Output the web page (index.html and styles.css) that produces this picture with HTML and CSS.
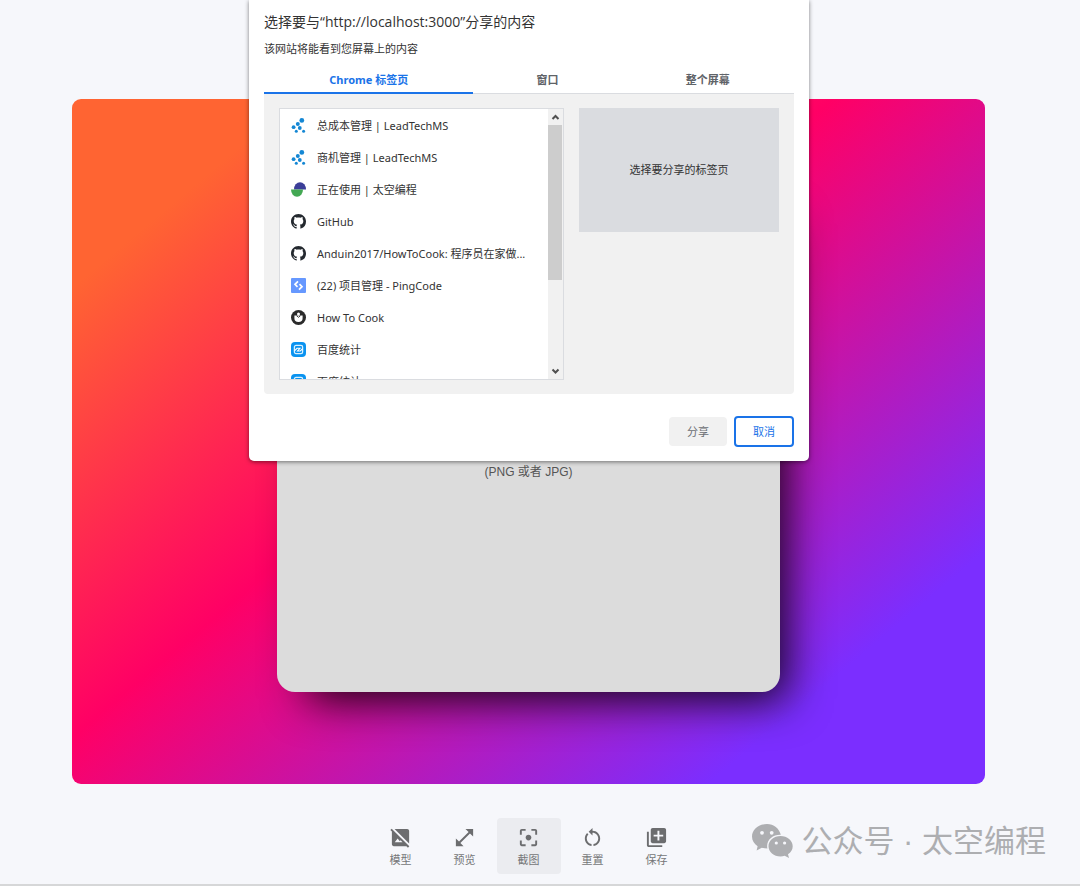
FILE: index.html
```
<!DOCTYPE html>
<html lang="zh-CN">
<head>
<meta charset="utf-8">
<meta name="viewport" content="width=device-width, initial-scale=1">
<title>截图</title>
<link rel="stylesheet" href="styles.css">
</head>
<body>
<svg class="defs" aria-hidden="true">
  <symbol id="dots" viewBox="0 0 15 15">
    <g fill="#1487d4"><circle cx="10.800" cy="2.400" r="2.400"/><circle cx="6.800" cy="6" r="2"/><circle cx="2.600" cy="9.200" r="1.900"/><circle cx="8.800" cy="10" r="1.900"/><circle cx="5.300" cy="13.300" r="1.500"/><circle cx="12.600" cy="13.300" r="1.500"/></g>
  </symbol>
  <symbol id="github" viewBox="0 0 16 16">
    <path fill="#24292f" d="M8 0C3.58 0 0 3.58 0 8c0 3.54 2.29 6.53 5.47 7.59.4.07.55-.17.55-.38 0-.19-.01-.82-.01-1.49-2.01.37-2.53-.49-2.69-.94-.09-.23-.48-.94-.82-1.13-.28-.15-.68-.52-.01-.53.63-.01 1.08.58 1.23.82.72 1.21 1.87.87 2.33.66.07-.52.28-.87.51-1.07-1.78-.2-3.64-.89-3.64-3.95 0-.87.31-1.59.82-2.15-.08-.2-.36-1.02.08-2.12 0 0 .67-.21 2.2.82.64-.18 1.32-.27 2-.27s1.36.09 2 .27c1.53-1.04 2.2-.82 2.2-.82.44 1.1.16 1.92.08 2.12.51.56.82 1.27.82 2.15 0 3.07-1.87 3.75-3.65 3.95.29.25.54.73.54 1.48 0 1.07-.01 1.93-.01 2.2 0 .21.15.46.55.38A8.01 8.01 0 0 0 16 8c0-4.42-3.58-8-8-8z"/>
  </symbol>
  <symbol id="baidu" viewBox="0 0 15 15">
    <rect width="15" height="15" rx="4" fill="#0a93f0"/>
    <rect x="3.4" y="3.4" width="8.2" height="8.2" rx="1.6" fill="none" stroke="#d9f0ff" stroke-width="1.3"/>
    <path d="M3.500 8.800 6 6.300h3L6.500 9h2.800l2.300-2.300" fill="none" stroke="#fff" stroke-width="1.1"/>
  </symbol>
</svg>

<main class="page">
  <section class="canvas">
    <div class="drop-card"><p>(PNG 或者 JPG)</p></div>
  </section>
  <nav class="toolbar" aria-label="工具">
    <button class="tool" type="button">
      <svg viewBox="0 0 24 24"><path d="M21 5c0-1.1-.9-2-2-2H5.83L21 18.17V5zM2.81 2.81 1.39 4.22 3 5.83V19c0 1.1.9 2 2 2h13.17l1.61 1.61 1.41-1.41L2.81 2.81zM6 17l3-4 2.25 3 .82-1.1 2.1 2.1H6z"/></svg>
      <span>模型</span>
    </button>
    <button class="tool" type="button">
      <svg viewBox="0 0 24 24"><path d="M21 11V3h-8l3.290 3.290-10 10L3 13v8h8l-3.290-3.290 10-10z"/></svg>
      <span>预览</span>
    </button>
    <button class="tool tool-active" type="button">
      <svg viewBox="0 0 24 24"><path d="M5 15H3v4c0 1.1.9 2 2 2h4v-2H5v-4zM5 5h4V3H5c-1.1 0-2 .9-2 2v4h2V5zm14-2h-4v2h4v4h2V5c0-1.1-.9-2-2-2zm0 16h-4v2h4c1.1 0 2-.9 2-2v-4h-2v4zM12 9c-1.66 0-3 1.34-3 3s1.34 3 3 3 3-1.34 3-3-1.34-3-3-3z"/></svg>
      <span>截图</span>
    </button>
    <button class="tool" type="button">
      <svg viewBox="0 0 24 24"><path d="M12 5V2L8 6l4 4V7c3.31 0 6 2.69 6 6 0 2.97-2.17 5.43-5 5.91v2.02c3.95-.49 7-3.85 7-7.93 0-4.42-3.58-8-8-8zm-6 8c0-1.65.67-3.15 1.76-4.24L6.34 7.34C4.9 8.79 4 10.79 4 13c0 4.08 3.05 7.44 7 7.93v-2.02c-2.83-.48-5-2.94-5-5.91z"/></svg>
      <span>重置</span>
    </button>
    <button class="tool" type="button">
      <svg viewBox="0 0 24 24"><path d="M4 6H2v14c0 1.1.9 2 2 2h14v-2H4V6zm16-4H8c-1.1 0-2 .9-2 2v12c0 1.1.9 2 2 2h12c1.1 0 2-.9 2-2V4c0-1.1-.9-2-2-2zm-1 9h-4v4h-2v-4H9V9h4V5h2v4h4v2z"/></svg>
      <span>保存</span>
    </button>
  </nav>
</main>
<div class="bottom-edge"></div>

<section class="dialog" role="dialog" aria-labelledby="dialog-title">
  <h1 class="dialog-title" id="dialog-title">选择要与“http://localhost:3000”分享的内容</h1>
  <p class="dialog-note">该网站将能看到您屏幕上的内容</p>
  <div class="tabs" role="tablist">
    <button class="tab tab-active" type="button" role="tab" aria-selected="true">Chrome 标签页</button>
    <button class="tab" type="button" role="tab">窗口</button>
    <button class="tab" type="button" role="tab">整个屏幕</button>
  </div>
  <div class="panel">
    <div class="list-box">
      <ul class="list">
        <li class="row"><svg><use href="#dots"/></svg><span class="row-text">总成本管理 | LeadTechMS</span></li>
        <li class="row"><svg><use href="#dots"/></svg><span class="row-text">商机管理 | LeadTechMS</span></li>
        <li class="row"><svg viewBox="0 0 15 15"><path d="M3 7.5a6 7.3 0 0 1 12 0z" fill="#3b3e98"/><path d="M0 7.5h12a6 7.3 0 0 1-12 0z" fill="#43a853"/></svg><span class="row-text">正在使用 | 太空编程</span></li>
        <li class="row"><svg><use href="#github"/></svg><span class="row-text">GitHub</span></li>
        <li class="row"><svg><use href="#github"/></svg><span class="row-text">Anduin2017/HowToCook: 程序员在家做...</span></li>
        <li class="row"><svg viewBox="0 0 15 15"><rect width="15" height="15" rx="1" fill="#6698ff"/><path d="M7 3.300 4 6.300 6.500 8.800M8 11.700l3-3L8.500 6.200" fill="none" stroke="#fff" stroke-width="1.700"/></svg><span class="row-text">(22) 项目管理 - PingCode</span></li>
        <li class="row"><svg viewBox="0 0 15 15"><circle cx="7.5" cy="7.5" r="7.5" fill="#2b2b2b"/><path d="M3.400 5.600h8.200v2.700a4.100 3.800 0 0 1-8.200 0z" fill="#fff"/><circle cx="7.500" cy="4.100" r="1.500" fill="#fff"/><path d="m5.600 5.800 1.900 1.500 1.900-1.500" fill="none" stroke="#2b2b2b" stroke-width=".9"/></svg><span class="row-text">How To Cook</span></li>
        <li class="row"><svg><use href="#baidu"/></svg><span class="row-text">百度统计</span></li>
        <li class="row"><svg><use href="#baidu"/></svg><span class="row-text">百度统计</span></li>
      </ul>
      <div class="scrollbar" aria-hidden="true">
        <svg viewBox="0 0 15 16"><path d="m4.500 10 3-3 3 3"/></svg>
        <div class="track"><div class="thumb"></div></div>
        <svg viewBox="0 0 15 16"><path d="m4.500 6.500 3 3 3-3"/></svg>
      </div>
    </div>
    <div class="preview">选择要分享的标签页</div>
  </div>
  <div class="actions">
    <button class="button button-share" type="button" disabled>分享</button>
    <button class="button button-cancel" type="button">取消</button>
  </div>
</section>

<div class="watermark">
  <svg viewBox="0 0 41 34"><path fill="#adaeb1" d="M15 0C6.700 0 0 5.600 0 12.600c0 4 2.200 7.400 5.600 9.700L4.600 26.500l5.200-2.700c1.800.5 3.600.7 5.600.7-1.700-8 5-14 13.400-13.700C27.200 4.500 21.800 0 15 0z"/><path fill="#adaeb1" d="M28.500 12c-6.700 0-12 4.500-12 10.200s5.300 10.200 12 10.200c1.500 0 2.900-.2 4.200-.6l4.300 2.200-1-3.700c2.900-1.900 4.700-4.800 4.700-8.100 0-5.700-5.500-10.200-12.200-10.200z"/><g fill="#f6f7fb"><circle cx="10" cy="8.800" r="1.900"/><circle cx="19.700" cy="8.800" r="1.900"/><circle cx="24.300" cy="19" r="1.600"/><circle cx="32.600" cy="19" r="1.600"/></g></svg>
  <span>公众号<span class="separator"> · </span>太空编程</span>
</div>
</body>
</html>
```

FILE: styles.css
```
* {
  box-sizing: border-box;
}

body {
  margin: 0;
  min-height: 100vh;
  display: flex;
  flex-direction: column;
  position: relative;
  background: #f6f7fb;
  color: #333;
  font-family: "Noto Sans", "Noto Sans CJK SC", sans-serif;
  font-size: 11px;
  line-height: 16px;
}

h1,
p,
ul {
  margin: 0;
  padding: 0;
}

button {
  font: inherit;
  border: 0;
  background: none;
  padding: 0;
}

.defs {
  position: absolute;
  width: 0;
  height: 0;
}

.page {
  flex: 1;
  padding: 99px 95px 10px 72px;
}

.canvas {
  aspect-ratio: 4 / 3;
  display: flex;
  align-items: center;
  justify-content: center;
  border-radius: 9px;
  background: linear-gradient(140deg, #ff6432 13%, #ff0065 44%, #7b2eff 84%);
}

.drop-card {
  width: 55%;
  aspect-ratio: 1;
  display: flex;
  align-items: center;
  justify-content: center;
  padding-top: 62px;
  border-radius: 18px;
  background: #dcdcdc;
  box-shadow: 18px 20px 44px -12px rgba(0, 0, 0, 0.9);
  color: #555;
  font-family: "Liberation Sans", "Noto Sans CJK SC", sans-serif;
  font-size: 12px;
}

.toolbar {
  display: flex;
  justify-content: center;
  margin-top: 34px;
}

.tool {
  width: 64px;
  height: 56px;
  display: flex;
  flex-direction: column;
  align-items: center;
  justify-content: center;
  gap: 3px;
  padding-top: 2px;
  border-radius: 4px;
  color: #757678;
}

.tool svg {
  width: 23px;
  height: 23px;
  fill: #6c6d6f;
}

.tool-active {
  background: #ebecf0;
}

.bottom-edge {
  height: 2px;
  background: #d6d7d8;
}

.dialog {
  position: absolute;
  top: 0;
  left: calc(50% - 291px);
  width: 560px;
  padding: 12px 15px 14px;
  border-radius: 0 0 5px 5px;
  background: #fff;
  box-shadow: 0 1px 4px rgba(0, 0, 0, 0.5);
}

.dialog-title {
  font-family: "Open Sans", "Noto Sans CJK SC", sans-serif;
  font-size: 14px;
  font-weight: 400;
  line-height: 20px;
}

.dialog-note {
  margin-top: 9px;
}

.tabs {
  display: grid;
  grid-template-columns: 209fr 148fr 172fr;
  margin-top: 8px;
}

.tab {
  height: 29px;
  padding-top: 2px;
  border-bottom: 1px solid #dadce0;
  color: #5f6368;
  font-weight: 700;
}

.tab-active {
  border-bottom: 2px solid #1a73e8;
  color: #1a73e8;
}

.panel {
  display: flex;
  align-items: flex-start;
  gap: 15px;
  padding: 14px 15px;
  border-radius: 0 0 4px 4px;
  background: #f1f1f1;
}

.list-box {
  flex: 1;
  height: 272px;
  display: flex;
  overflow: hidden;
  border: 1px solid #dadce0;
  background: #fff;
}

.list {
  flex: 1;
  list-style: none;
}

.row {
  height: 32px;
  display: flex;
  align-items: center;
  gap: 11px;
  padding-left: 11px;
  white-space: nowrap;
}

.row svg {
  width: 15px;
  height: 15px;
}

.row-text {
  padding-top: 2px;
}

.scrollbar {
  width: 15px;
  display: flex;
  flex-direction: column;
  background: #f1f1f1;
}

.scrollbar svg {
  height: 16px;
  fill: none;
  stroke: #505050;
  stroke-width: 2;
}

.track {
  flex: 1;
}

.thumb {
  width: 14px;
  height: 65%;
  background: #cdcdcd;
}

.preview {
  width: 200px;
  height: 124px;
  display: flex;
  align-items: center;
  justify-content: center;
  background: #dadce0;
}

.actions {
  display: flex;
  justify-content: flex-end;
  align-items: center;
  gap: 7px;
  margin-top: 22px;
}

.button {
  width: 58px;
  height: 29px;
  border-radius: 4px;
}

.button-share {
  background: #f1f1f1;
  color: #6b6e73;
}

.button-cancel {
  width: 60px;
  height: 31px;
  border: 2px solid #1a73e8;
  color: #1a73e8;
}

.watermark {
  position: absolute;
  right: 34px;
  bottom: 24px;
  display: flex;
  align-items: center;
  gap: 8px;
  color: #adaeb1;
  font-family: "Noto Sans CJK SC", sans-serif;
  font-size: 31px;
  line-height: 40px;
}

.separator {
  font-family: "Liberation Sans", sans-serif;
}

.watermark svg {
  width: 41px;
  height: 34px;
}
```
